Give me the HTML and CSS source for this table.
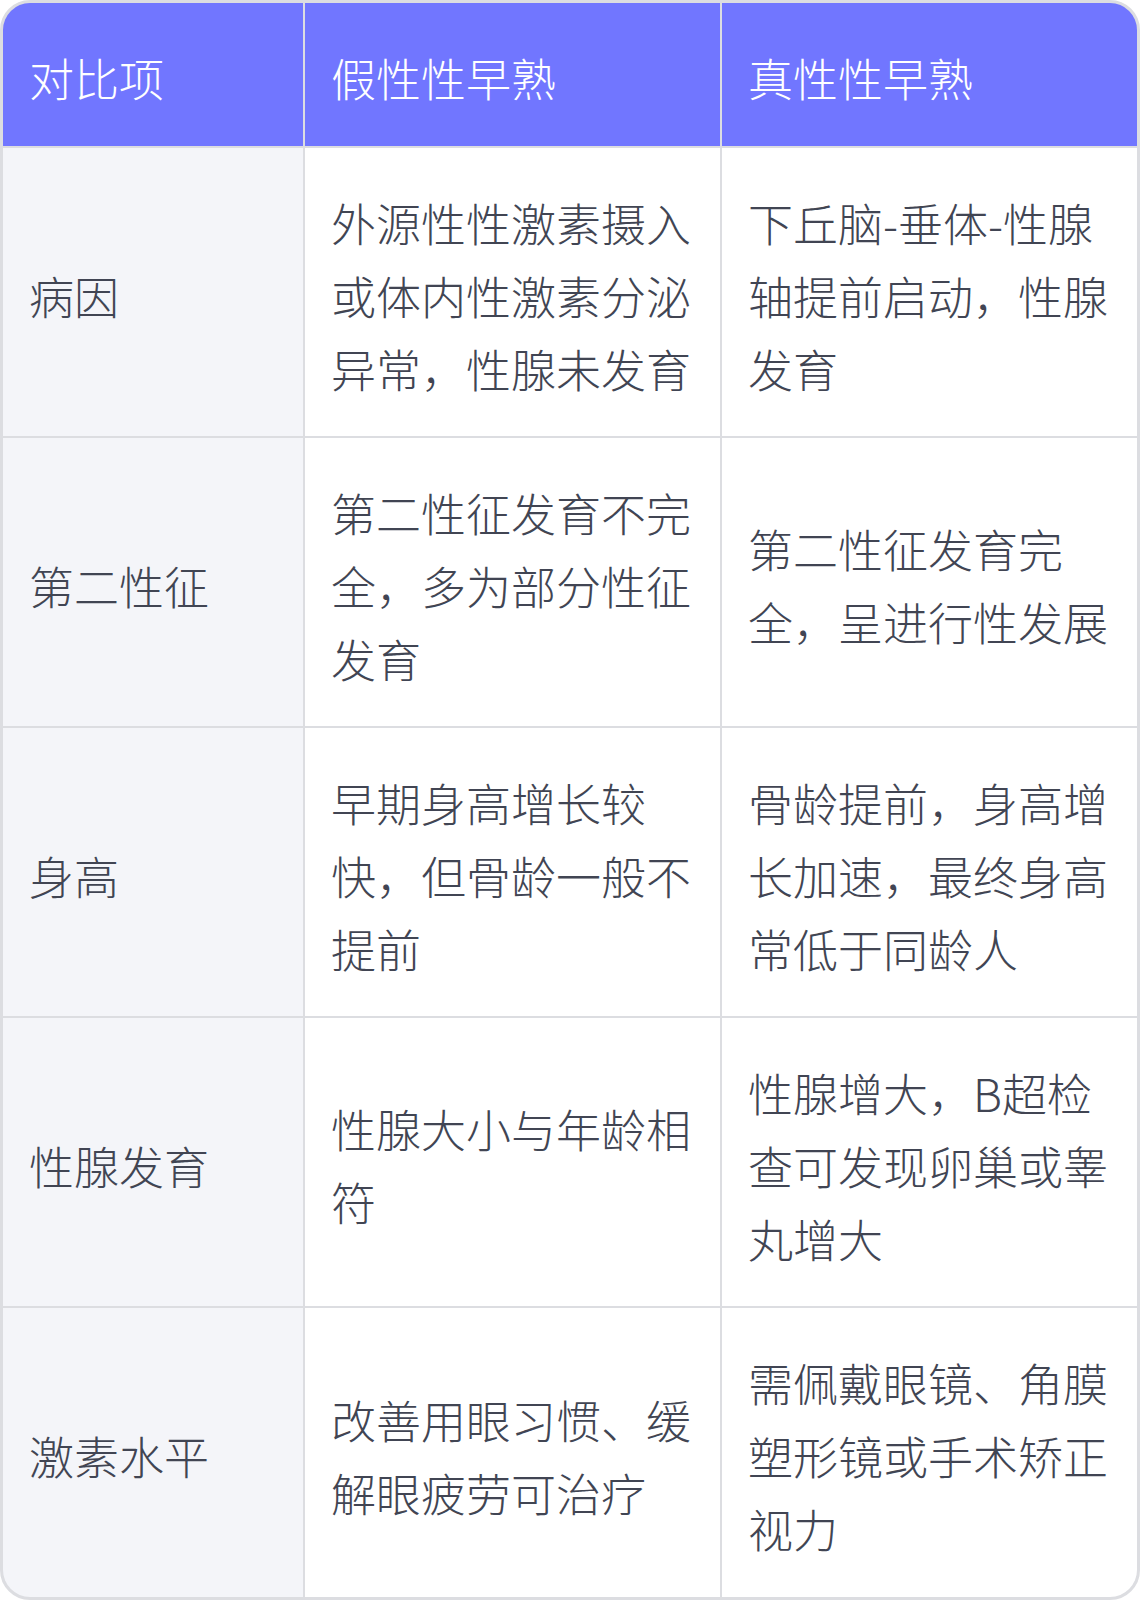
FILE: index.html
```html
<!DOCTYPE html>
<html lang="zh-CN">
<head>
<meta charset="utf-8">
<link rel="stylesheet" href="styles.css">
</head>
<body>
<div class="table">
  <div class="cell head">对比项</div>
  <div class="cell head">假性性早熟</div>
  <div class="cell head">真性性早熟</div>

  <div class="cell label">病因</div>
  <div class="cell">外源性性激素摄入或体内性激素分泌异常，性腺未发育</div>
  <div class="cell">下丘脑-垂体-性腺轴提前启动，性腺发育</div>

  <div class="cell label">第二性征</div>
  <div class="cell">第二性征发育不完全，多为部分性征发育</div>
  <div class="cell">第二性征发育完全，呈进行性发展</div>

  <div class="cell label">身高</div>
  <div class="cell">早期身高增长较快，但骨龄一般不提前</div>
  <div class="cell">骨龄提前，身高增长加速，最终身高常低于同龄人</div>

  <div class="cell label">性腺发育</div>
  <div class="cell">性腺大小与年龄相符</div>
  <div class="cell">性腺增大，B超检查可发现卵巢或睾丸增大</div>

  <div class="cell label">激素水平</div>
  <div class="cell">改善用眼习惯、缓解眼疲劳可治疗</div>
  <div class="cell">需佩戴眼镜、角膜塑形镜或手术矫正视力</div>
</div>
</body>
</html>
```

FILE: styles.css
```css
html, body {
  margin: 0;
  padding: 0;
  background: #ffffff;
}

.table {
  width: 1140px;
  height: 1600px;
  box-sizing: border-box;
  border: 3px solid #dcdde1;
  border-radius: 30px;
  overflow: hidden;
  background: #dcdde1;
  display: grid;
  grid-template-columns: 300px 415px 415px;
  grid-template-rows: 143px 288px 288px 288px 288px 289px;
  gap: 2px;
  font-family: "Noto Sans CJK SC", "Noto Sans", sans-serif;
  font-weight: 300;
  font-size: 45px;
  line-height: 73px;
  color: #414553;
}

.cell {
  background: #ffffff;
  padding: 6px 26px 0 26px;
  display: flex;
  align-items: center;
}

.head {
  background: #7176ff;
  color: #ffffff;
}

.label {
  background: #f4f5f9;
}
```
